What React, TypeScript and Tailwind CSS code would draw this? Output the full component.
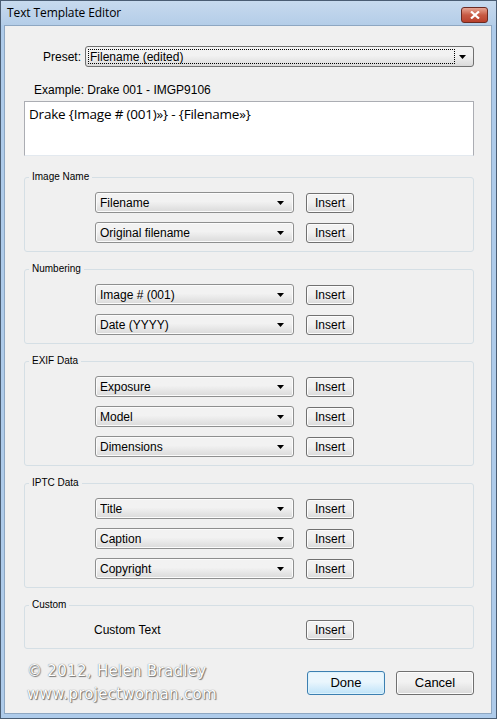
import React from 'react';

const ui = "font-['Liberation_Sans',Arial,sans-serif]";

const Arrow = () => (
  <svg width="7" height="4" viewBox="0 0 7 4" className="shrink-0">
    <path d="M0 0h7L3.5 4z" fill="#000" />
  </svg>
);

const Combo: React.FC<{ value: string }> = ({ value }) => (
  <div className="flex items-center h-[21px] w-[199px] rounded-[3px] border border-[#8e8f8f] bg-gradient-to-b from-[#f2f2f2] from-45% to-[#dadada] pl-[4px] pr-[9px] shadow-[inset_0_0_0_1px_#fbfbfb]">
    <span className="flex-1 text-[12px] text-black truncate">{value}</span>
    <Arrow />
  </div>
);

const InsertButton = () => (
  <button className="h-[20px] w-[48px] rounded-[3px] border border-[#707070] bg-gradient-to-b from-[#f2f2f2] from-45% to-[#dadada] text-[12px] text-black shadow-[inset_0_0_0_1px_#fcfcfc]">
    Insert
  </button>
);

const Group: React.FC<{ label: string; children: React.ReactNode }> = ({ label, children }) => (
  <fieldset className="border border-[#d5dfe5] rounded-[3px] px-0 pt-[9px] pb-[8px]">
    <legend className="ml-[4px] px-[3px] h-[12px] text-[10px] leading-[12px] text-black">{label}</legend>
    <div className="flex flex-col gap-[9px]">{children}</div>
  </fieldset>
);

const Row: React.FC<{ value: string }> = ({ value }) => (
  <div className="flex items-center gap-[12px] pl-[70px]">
    <Combo value={value} />
    <InsertButton />
  </div>
);

export default function App() {
  return (
    <div className={`w-[497px] h-[719px] flex flex-col bg-[#aecbea] border border-[#4a5d73] ${ui}`}>
      {/* title bar */}
      <div className="h-[24px] flex items-center justify-between pl-[6px] pr-[8px] bg-gradient-to-b from-[#c7daee] to-[#b4cde8]">
        <span className="text-[12px] text-black font-['Open_Sans',sans-serif] tracking-[-0.1px]">Text Template Editor</span>
        <div className="w-[27px] h-[16px] mt-[3px] rounded-[3px] border border-[#6b2a22] bg-gradient-to-b from-[#e6a593] via-[#c75a44] to-[#b8402c] flex items-center justify-center">
          <svg width="10" height="8" viewBox="0 0 10 8">
            <path d="M1 0.5l8 7M9 0.5l-8 7" stroke="#fff" strokeWidth="2.2" />
          </svg>
        </div>
      </div>

      {/* client area */}
      <div className="flex-1 mx-[3px] mr-[4px] mb-[4px] bg-[#f0f0f0] border border-[#8ea7c2] pl-[19px] pr-[17px] pt-[20px] flex flex-col">
        <div className="flex items-center">
          <span className="w-[61px] pl-[19px] text-[12px]">Preset:</span>
          <div className="flex-1 h-[21px] flex items-center rounded-[3px] border border-[#707070] bg-gradient-to-b from-[#f2f2f2] from-45% to-[#dadada] pl-[2px] pr-[3px]">
            <div className="flex-1 h-[15px] border border-dotted border-black flex items-center pl-[1px] text-[12px]">
              Filename (edited)
            </div>
            <div className="w-[15px] flex justify-center">
              <Arrow />
            </div>
          </div>
        </div>

        <div className="mt-[14px] pl-[10px] text-[12px]">Example: Drake 001 - IMGP9106</div>

        <div className="mt-[2px] h-[55px] bg-white border border-[#abadb3] border-b-[#e3e9ef] px-[4px] pt-[2px] text-[13.5px] font-['Open_Sans',sans-serif] tracking-[-0.2px]">
          Drake {'{'}Image # (001)»{'}'} - {'{'}Filename»{'}'}
        </div>

        <div className="mt-[15px] flex flex-col gap-[11px]">
          <Group label="Image Name">
            <Row value="Filename" />
            <Row value="Original filename" />
          </Group>
          <Group label="Numbering">
            <Row value="Image # (001)" />
            <Row value="Date (YYYY)" />
          </Group>
          <Group label="EXIF Data">
            <Row value="Exposure" />
            <Row value="Model" />
            <Row value="Dimensions" />
          </Group>
          <Group label="IPTC Data">
            <Row value="Title" />
            <Row value="Caption" />
            <Row value="Copyright" />
          </Group>
          <Group label="Custom">
            <div className="flex items-center h-[20px]">
              <span className="w-[281px] pl-[69px] text-[12px]">Custom Text</span>
              <InsertButton />
            </div>
          </Group>
        </div>

        <div className="flex items-start mt-[11px]">
          <div className="flex-1 pl-[3px] font-['DejaVu_Sans',sans-serif] text-[15px] leading-[23px] tracking-[0.3px] text-white [text-shadow:0_0_1px_#555,1px_1px_1px_#777]">
            <div>© 2012, Helen Bradley</div>
            <div>www.projectwoman.com</div>
          </div>
          <div className="flex gap-[11px] mt-[11px]">
            <button className="h-[24px] w-[78px] rounded-[3px] border border-[#3c7fb1] bg-gradient-to-b from-[#eaf6fd] from-45% to-[#bfe3f8] text-[13px] shadow-[inset_0_0_0_1px_#dcf2fc]">
              Done
            </button>
            <button className="h-[24px] w-[78px] rounded-[3px] border border-[#707070] bg-gradient-to-b from-[#f2f2f2] from-45% to-[#dadada] text-[13px] shadow-[inset_0_0_0_1px_#fcfcfc]">
              Cancel
            </button>
          </div>
        </div>
      </div>
    </div>
  );
}
